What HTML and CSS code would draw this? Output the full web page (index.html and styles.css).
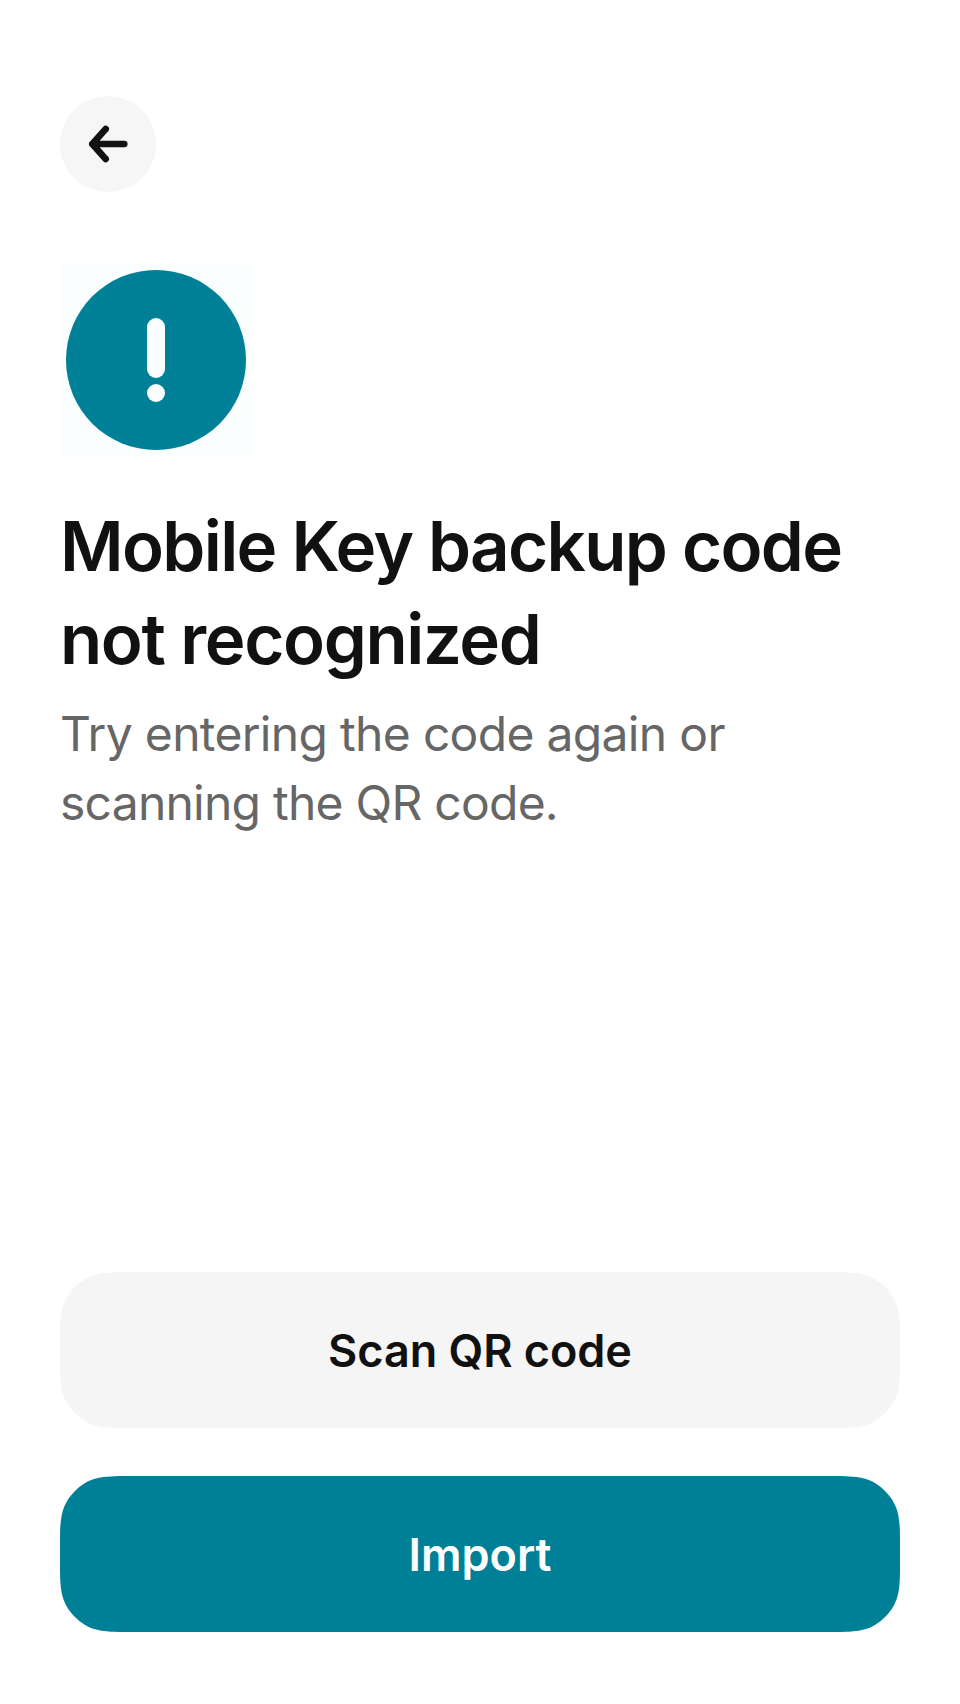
FILE: index.html
```html
<!DOCTYPE html>
<html lang="en">
<head>
<meta charset="utf-8">
<title>Mobile Key backup</title>
<link rel="stylesheet" href="styles.css">
</head>
<body>
<main class="screen">
  <button class="back" aria-label="Back">
    <svg width="96" height="96" viewBox="0 0 96 96"><path d="M64.300 48H32.300M45.700 33 32.300 48l13.400 15"/></svg>
  </button>
  <div class="status">
    <svg width="192" height="192" viewBox="0 0 192 192">
      <circle class="disc" cx="96" cy="96" r="90"/>
      <rect x="87" y="54" width="18" height="60" rx="9"/>
      <circle cx="96" cy="129" r="9"/>
    </svg>
  </div>
  <h1 class="title">Mobile Key backup code<br><span class="title-end">not recognized</span></h1>
  <p class="message">Try entering the code again or<br><span class="message-end">scanning the QR code.</span></p>
  <div class="actions">
    <button class="button secondary"><svg class="shape" viewBox="0 0 840 156"><path d="M68 0H772C798 0 811 1 825 15C839 29 840 42 840 66V90C840 114 839 127 825 141C811 155 798 156 772 156H68C42 156 29 155 15 141C1 127 0 114 0 90V66C0 42 1 29 15 15C29 1 42 0 68 0Z"/></svg><span>Scan QR code</span></button>
    <button class="button primary"><svg class="shape" viewBox="0 0 840 156"><path d="M68 0H772C798 0 811 1 825 15C839 29 840 42 840 66V90C840 114 839 127 825 141C811 155 798 156 772 156H68C42 156 29 155 15 141C1 127 0 114 0 90V66C0 42 1 29 15 15C29 1 42 0 68 0Z"/></svg><span>Import</span></button>
  </div>
</main>
</body>
</html>
```
FILE: styles.css
```css
* { box-sizing: border-box; }
body { margin: 0; background: #fff; font-family: Inter, sans-serif; color: #111; }
.screen { height: 1704px; padding: 96px 60px 72px; display: flex; flex-direction: column; }
button { border: 0; padding: 0; font-family: inherit; }
.back { width: 96px; height: 96px; border-radius: 50%; background: #f6f6f6; }
svg { display: block; }
.back path { fill: none; stroke: #111; stroke-width: 6.6; stroke-linecap: round; stroke-linejoin: round; }
.status { width: 192px; height: 192px; margin-top: 72px; background: #fafeff; fill: #fafeff; }
.disc { fill: #008097; }
.title { margin: 44px 0 0; font-size: 69px; line-height: 93px; font-weight: 600; letter-spacing: -1.66px; white-space: nowrap; }
.title-end { letter-spacing: -1.4px; }
.message { margin: 13px 0 0; font-size: 48px; line-height: 69.300px; letter-spacing: -0.68px; color: #666; white-space: nowrap; }
.message-end { letter-spacing: -0.76px; }
.actions { margin-top: auto; display: grid; gap: 48px; }
.button { position: relative; height: 156px; background: none; font-size: 45px; font-weight: 600; }
.button span { position: relative; }
.shape { position: absolute; inset: 0; }
.secondary { color: #111; fill: #f5f5f5; letter-spacing: -0.05px; }
.primary { color: #fff; fill: #008097; }
```
